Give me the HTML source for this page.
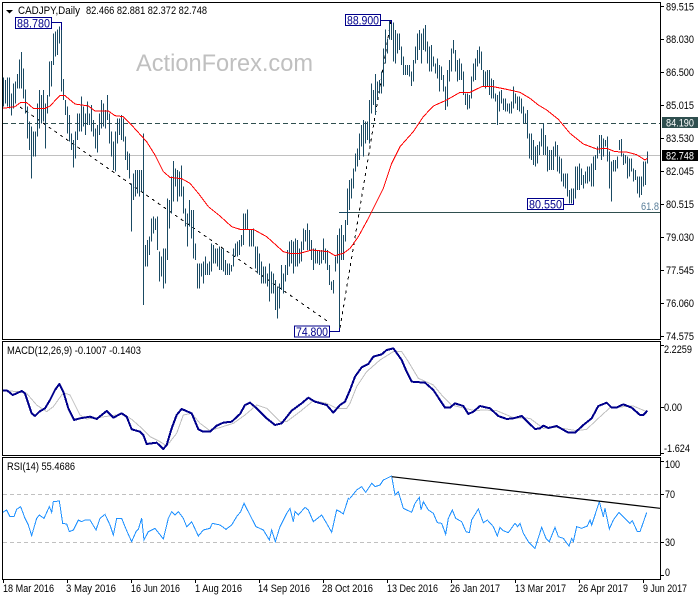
<!DOCTYPE html>
<html><head><meta charset="utf-8"><style>
html,body{margin:0;padding:0;background:#fff}
svg{display:block}
text{font-family:"Liberation Sans",sans-serif;font-size:11px;fill:#000}
.b{font-size:12px;fill:#00008b}
</style></head><body>
<svg width="700" height="600" viewBox="0 0 700 600" xmlns="http://www.w3.org/2000/svg">
<rect width="700" height="600" fill="#fff"/>
<!-- watermark -->
<text x="136" y="71" textLength="177" lengthAdjust="spacingAndGlyphs" style="font-size:24px;fill:#c0c0c0">ActionForex.com</text>
<!-- level lines -->
<g shape-rendering="crispEdges" fill="none">
<path d="M3 123.5H660" stroke="#2f4f4f" stroke-dasharray="5 3"/>
<path d="M3 155.5H660" stroke="#c0c0c0"/>
<path d="M339 212.5H660" stroke="#2f4f4f"/>
</g>
<!-- trend dashes -->
<g fill="none" stroke="#000" stroke-dasharray="3 4" shape-rendering="crispEdges">
<path d="M20 107L330 323"/>
<path d="M340 328L391 20"/>
</g>
<!-- bars left -->
<g transform="scale(.33333)" fill="none" stroke="#1a4a63" stroke-width="3" shape-rendering="crispEdges">
<path d="M10 232V320M16 240V310M22 232V320M28 232V325M34 280V347M40 250V325M46 245V310M52 222V265M58 178V265M64 156V265M70 205V295M76 268V340M82 320V415M88 365V450M94 380V536M100 395V470M106 395V470M112 310V410M118 270V385M124 285V370M130 270V365M136 310V445M142 285V340M148 185V290M154 183V260M160 100V195M166 95V170M172 88V165M178 80V130M184 67V275M190 237V300M196 300V345M202 320V400M208 345V425M214 400V450M220 420V503M226 395V475M232 340V420M238 340V395M244 290V395M250 320V380M256 340V405M262 305V375M268 340V375M274 315V395M280 360V410M286 385V445M292 375V458M298 340V405M304 300V385M310 310V380M316 330V385M322 285V360M328 340V430M334 395V470M340 425V510M346 395V515M352 355V430M358 355V405M364 345V420M370 355V425M376 410V480M382 455V510M388 460V535M394 550V695M400 520V600M406 510V590M412 510V580M418 510V590M424 510V575M430 400V915M436 735V800M442 720V800M448 710V765M454 655V725M460 650V700M466 655V690M472 650V750M478 755V845M484 770V830M490 745V865M496 745V850M502 595V780M508 600V685M514 530V640M520 483V605M526 505V560M532 510V605M538 515V590M544 497V590M550 560V640M556 625V680M562 640V740M568 600V680M574 630V715M580 630V775M586 730V780M592 790V865M598 790V865M604 790V830M610 785V850M616 770V825M622 790V825M628 785V825M634 730V815M640 735V790M646 745V790M652 745V800M658 740V810M664 745V810M670 745V815M676 780V825M682 790V825M688 790V825M694 795V815M700 745V800M706 730V770M712 725V770M718 720V765M724 705V740M730 640V735M736 640V690M742 628V690M748 690V740M754 690V740M760 685V740M766 740V805M772 740V820M778 760V825M784 785V850M790 800V850M796 800V850M802 820V860M808 790V905M814 815V880M820 820V880M826 840V930M832 860V955M838 850V925M844 795V870M850 820V880M856 795V845M862 750V825M868 725V800M874 720V790M880 725V820M886 715V800M892 720V800M898 745V790M904 725V785M910 685V750M916 690V725M922 670V750M928 690V750M934 720V780M940 745V810M946 745V790M952 750V790M958 750V795M964 750V790M970 715V780M976 745V790M982 750V810M988 795V855M994 845V870M1000 840V880M1006 770V815M1012 705V790M1018 685V990M1024 675V780M1030 705V780M1036 660V725M1042 565V675M1048 540V630"/>
<path d="M1018 637H1050" stroke="#1a4a63"/>
</g>
<!-- bars right -->
<g transform="translate(350 0) scale(.33333)" fill="none" stroke="#1a4a63" stroke-width="3" shape-rendering="crispEdges">
<path d="M4 535V595M10 505V565M16 460V515M22 445V500M28 400V480M34 375V440M40 360V470M46 365V430M52 365V420M58 300V430M64 250V340M70 270V315M76 222V345M82 245V300M88 240V280M94 215V280M100 145V260M106 88V190M112 115V160M118 60V118M124 60V120M130 68V185M136 90V190M142 100V160M148 100V150M154 140V195M160 170V225M166 195V225M172 195V225M178 195V230M184 215V258M190 180V245M196 140V190M202 100V180M208 90V150M214 100V190M220 85V150M226 75V155M232 125V190M238 140V215M244 135V215M250 170V200M256 190V220M262 175V235M268 195V275M274 200V240M280 225V275M286 260V330M292 210V320M298 180V245M304 145V215M310 120V160M316 150V215M322 180V245M328 175V240M334 190V240M340 215V285M346 280V315M352 280V328M358 285V325M364 230V295M370 190V245M376 175V240M382 150V200M388 140V190M394 155V210M400 210V260M406 215V265M412 210V260M418 210V285M424 235V295M430 240V295M436 280V305M442 285V375M448 275V335M454 270V310M460 295V330M466 295V335M472 310V335M478 310V340M484 305V340M490 260V325M496 280V310M502 290V330M508 290V335M514 295V340M520 320V370M526 340V370M532 330V415M538 400V475M544 400V480M550 420V495M556 440V500M562 435V490M568 425V465M574 385V440M580 370V465M586 405V465M592 440V515M598 450V510M604 450V510M610 440V510M616 425V470M622 435V515M628 470V520M634 475V545M640 520V560M646 520V565M652 520V590M658 570V610M664 565V610M670 565V610M676 500V595M682 500V570M688 490V570M694 505V555M700 525V565M706 515V550M712 500V550M718 500V545M724 490V560M730 470V560M736 465V510M742 440V475M748 405V460M754 405V480M760 415V470M766 420V440M772 410V485M778 455V565M784 485V605M790 480V515M796 480V515M802 470V505M808 420V450M814 417V470M820 460V495M826 465V490M832 470V535M838 475V530M844 475V515M850 505V545M856 510V540M862 530V580M868 530V592M874 530V585M880 485V560M886 485V555M892 455V490"/>
</g>
<!-- MA -->
<g fill="none" stroke="#f00" stroke-width="3" shape-rendering="crispEdges">
<polyline transform="scale(.33333)" points="8,325 30,322 45,320 62,307 80,308 100,325 135,325 150,318 165,302 180,287 195,287 225,312 265,318 285,333 325,333 345,347 370,350 390,370 420,403 440,425 465,465 490,515 510,532 545,536 570,550 595,580 625,620 660,648 695,680 720,688 760,688 800,710 850,755 870,760 900,760 935,750 985,755 1005,767 1030,760 1050,745"/>
<polyline transform="translate(350 0) scale(.33333)" points="0,745 4,740 25,710 55,655 100,565 125,490 150,440 190,395 220,350 250,318 290,300 330,277 360,277 395,260 430,260 470,268 510,277 540,295 565,315 590,330 625,358 660,400 700,432 740,447 770,445 795,455 830,456 860,464 885,480 892,475"/>
</g>
<!-- MACD -->
<g fill="none" stroke="#c0c0c0" stroke-width="3" shape-rendering="crispEdges">
<polyline transform="translate(0 340) scale(.33333)" points="8,152 60,155 80,160 110,195 140,215 160,200 190,158 210,165 240,225 260,237 300,232 370,222 395,238 420,260 450,290 480,305 500,318 530,280 550,225 575,220 600,250 630,272 700,250 735,225 770,195 800,205 840,245 860,245 900,215 940,182 980,190 1010,205 1040,205 1050,190"/>
<polyline transform="translate(350 340) scale(.33333)" points="0,190 20,140 50,95 90,60 130,35 155,35 175,65 205,115 250,135 275,165 305,195 345,205 375,212 400,210 440,212 490,233 540,235 580,265 620,262 680,272 710,268 745,235 780,203 850,198 890,215"/>
</g>
<g fill="none" stroke="#00008b" stroke-width="6" stroke-linejoin="round" shape-rendering="crispEdges">
<polyline transform="translate(0 340) scale(.33333)" points="8,152 22,152 38,165 50,160 65,153 75,160 85,190 95,220 105,228 118,215 135,205 150,180 165,150 178,132 190,155 205,205 222,240 240,235 270,230 290,237 305,225 320,213 340,233 365,220 380,230 395,268 420,275 430,285 440,312 470,308 490,327 500,315 515,265 530,225 545,207 575,220 595,268 610,275 630,275 650,257 670,248 695,245 720,222 735,195 750,188 770,205 800,235 825,255 845,250 875,212 905,190 925,173 945,185 980,195 1000,218 1020,195 1035,185 1050,150"/>
<polyline transform="translate(350 340) scale(.33333)" points="0,150 15,110 35,82 55,72 70,50 95,43 110,30 130,25 155,60 170,95 185,125 225,128 250,150 285,203 300,203 315,190 340,198 355,222 370,215 390,198 420,205 445,228 470,237 490,235 515,228 555,267 570,265 580,257 595,264 620,258 655,278 675,278 700,255 725,235 745,198 770,188 785,203 800,203 820,193 845,203 870,225 880,225 892,212"/>
</g>
<!-- RSI -->
<g shape-rendering="crispEdges" fill="none" stroke="#c0c0c0" stroke-dasharray="4 3">
<path d="M3 494.5H660M3 542.5H660"/>
</g>
<g fill="none" stroke="#1e90ff" stroke-width="3" shape-rendering="crispEdges">
<polyline transform="translate(0 340) scale(.33333)" points="8,517 20,510 30,530 42,530 50,508 62,500 75,535 85,555 95,587 110,535 118,525 132,535 148,500 155,517 160,485 178,483 188,550 200,552 208,575 220,570 235,540 245,545 255,540 270,540 288,570 300,535 315,523 330,555 340,585 350,535 365,535 380,572 395,605 408,575 415,568 425,535 432,600 445,575 465,565 490,597 505,535 515,515 525,525 535,515 550,535 560,560 575,545 595,588 610,570 630,565 637,550 660,555 678,568 695,555 710,530 722,515 732,490 750,525 768,560 790,570 808,600 815,570 826,605 840,560 860,520 870,505 880,545 885,515 895,525 915,502 925,510 940,545 965,525 980,550 995,577 1010,510 1020,515 1030,522 1045,475 1050,478"/>
<polyline transform="translate(350 340) scale(.33333)" points="0,475 20,450 35,440 47,457 65,430 75,440 90,435 100,420 125,408 135,465 145,455 160,505 185,517 195,490 208,472 213,510 220,485 235,510 250,520 262,548 275,550 287,583 295,535 307,510 317,535 335,545 348,575 358,578 365,540 385,507 400,548 412,540 430,560 442,588 450,562 460,572 475,578 495,550 503,560 510,550 520,580 535,605 555,625 575,562 588,595 598,605 615,562 625,590 640,595 657,618 665,595 670,605 680,560 695,565 712,558 720,540 725,555 735,525 748,485 760,530 765,505 778,567 790,540 807,517 830,540 840,550 847,542 862,575 870,575 890,518"/>
</g>
<path d="M391.7 476.7L660 508.3" stroke="#000" stroke-width="1.2" fill="none"/>
<!-- frames and ticks -->
<g fill="none" stroke="#000" shape-rendering="crispEdges">
<rect x="2.5" y="2.5" width="658" height="337"/>
<rect x="2.5" y="341.5" width="658" height="114"/>
<rect x="2.5" y="457.5" width="658" height="122"/>
<path d="M660 6.5h4M660 39.5h4M660 72.5h4M660 105.5h4M660 138.5h4M660 171.5h4M660 204.5h4M660 237.5h4M660 270.5h4M660 303.5h4M660 336.5h4M660 407.5h4M660 345.5h4M660 453.5h4M660 461.5h4M660 494.5h4M660 542.5h4M660 575.5h4"/>
<path d="M3.5 580v3M67.5 580v3M131.5 580v3M195.5 580v3M259.5 580v3M323.5 580v3M387.5 580v3M451.5 580v3M515.5 580v3M579.5 580v3M643.5 580v3"/>
</g>
<!-- extreme labels -->
<g shape-rendering="crispEdges" fill="none" stroke="#00008b">
<path d="M52 22.5H61.5V30"/>
<path d="M329 331.5H339.5V328"/>
<path d="M381 20.5H391.5V24"/>
<path d="M563 204.5H573.5V200"/>
<rect x="15.5" y="17.5" width="36" height="11" fill="#fff"/>
<rect x="294.5" y="326" width="35" height="11" fill="#fff"/>
<rect x="345.5" y="14.5" width="35" height="11" fill="#fff"/>
<rect x="527.5" y="198.5" width="36" height="11" fill="#fff"/>
</g>
<text class="b" x="17" y="27.5" textLength="33" lengthAdjust="spacingAndGlyphs">88.780</text>
<text class="b" x="296" y="336" textLength="32" lengthAdjust="spacingAndGlyphs">74.800</text>
<text class="b" x="347" y="24.5" textLength="32" lengthAdjust="spacingAndGlyphs">88.900</text>
<text class="b" x="529" y="208.5" textLength="33" lengthAdjust="spacingAndGlyphs">80.550</text>
<!-- title -->
<path d="M6 10h7l-3.5 3.5z" fill="#000"/>
<text x="18" y="14" textLength="62" lengthAdjust="spacingAndGlyphs">CADJPY,Daily</text>
<text x="86" y="14" textLength="121" lengthAdjust="spacingAndGlyphs">82.466 82.881 82.372 82.748</text>
<text x="7" y="354" textLength="134" lengthAdjust="spacingAndGlyphs">MACD(12,26,9) -0.1007 -0.1403</text>
<text x="7" y="470" textLength="68" lengthAdjust="spacingAndGlyphs">RSI(14) 55.4686</text>
<text x="641" y="210" textLength="18" lengthAdjust="spacingAndGlyphs" style="fill:#5a7f9a">61.8</text>
<!-- price axis -->
<rect x="662" y="117" width="36" height="11" fill="#2f4f4f"/>
<rect x="662" y="150" width="36" height="11" fill="#000"/>
<g>
<text x="666" y="10.5" textLength="28" lengthAdjust="spacingAndGlyphs">89.515</text>
<text x="666" y="43" textLength="28" lengthAdjust="spacingAndGlyphs">88.030</text>
<text x="666" y="76" textLength="28" lengthAdjust="spacingAndGlyphs">86.500</text>
<text x="666" y="109" textLength="28" lengthAdjust="spacingAndGlyphs">85.015</text>
<text x="666" y="126.5" textLength="28" lengthAdjust="spacingAndGlyphs" style="fill:#fff">84.190</text>
<text x="666" y="142" textLength="28" lengthAdjust="spacingAndGlyphs">83.530</text>
<text x="666" y="159.5" textLength="28" lengthAdjust="spacingAndGlyphs" style="fill:#fff">82.748</text>
<text x="666" y="175" textLength="28" lengthAdjust="spacingAndGlyphs">82.045</text>
<text x="666" y="208" textLength="28" lengthAdjust="spacingAndGlyphs">80.515</text>
<text x="666" y="241" textLength="28" lengthAdjust="spacingAndGlyphs">79.030</text>
<text x="666" y="274" textLength="28" lengthAdjust="spacingAndGlyphs">77.545</text>
<text x="666" y="307" textLength="28" lengthAdjust="spacingAndGlyphs">76.060</text>
<text x="666" y="340" textLength="28" lengthAdjust="spacingAndGlyphs">74.575</text>
<text x="664" y="353" textLength="28" lengthAdjust="spacingAndGlyphs">2.2259</text>
<text x="664" y="411" textLength="18" lengthAdjust="spacingAndGlyphs">0.00</text>
<text x="664" y="452" textLength="26" lengthAdjust="spacingAndGlyphs">-1.624</text>
<text x="665" y="468" textLength="15" lengthAdjust="spacingAndGlyphs">100</text>
<text x="665" y="498" textLength="10" lengthAdjust="spacingAndGlyphs">70</text>
<text x="665" y="546" textLength="10" lengthAdjust="spacingAndGlyphs">30</text>
<text x="665" y="576" textLength="5" lengthAdjust="spacingAndGlyphs">0</text>
</g>
<!-- date axis -->
<g>
<text x="3" y="592" textLength="51" lengthAdjust="spacingAndGlyphs">18 Mar 2016</text>
<text x="66" y="592" textLength="50" lengthAdjust="spacingAndGlyphs">3 May 2016</text>
<text x="131" y="592" textLength="49" lengthAdjust="spacingAndGlyphs">16 Jun 2016</text>
<text x="195" y="592" textLength="47" lengthAdjust="spacingAndGlyphs">1 Aug 2016</text>
<text x="258" y="592" textLength="52" lengthAdjust="spacingAndGlyphs">14 Sep 2016</text>
<text x="322" y="592" textLength="51" lengthAdjust="spacingAndGlyphs">28 Oct 2016</text>
<text x="387" y="592" textLength="51" lengthAdjust="spacingAndGlyphs">13 Dec 2016</text>
<text x="450" y="592" textLength="50" lengthAdjust="spacingAndGlyphs">26 Jan 2017</text>
<text x="515" y="592" textLength="51" lengthAdjust="spacingAndGlyphs">13 Mar 2017</text>
<text x="578" y="592" textLength="50" lengthAdjust="spacingAndGlyphs">26 Apr 2017</text>
<text x="643" y="592" textLength="44" lengthAdjust="spacingAndGlyphs">9 Jun 2017</text>
</g>
</svg>
</body></html>
